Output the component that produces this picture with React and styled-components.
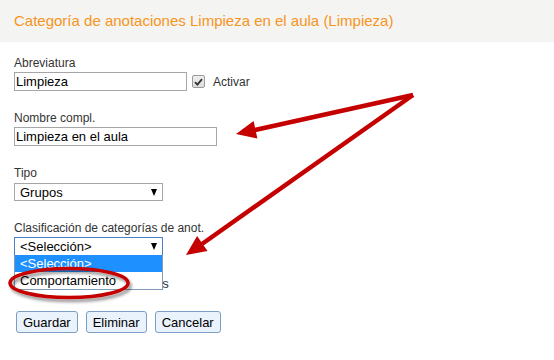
import React from "react";
import styled, { createGlobalStyle } from "styled-components";

const GlobalStyle = createGlobalStyle`
html, body {
  margin: 0;
  padding: 0;
  background: #ffffff;
  font-family: "Liberation Sans", Arial, sans-serif;
}
`

const Page = styled.div`
position: relative;
width: 554px;
height: 360px;
overflow: hidden;
background: #ffffff;
`

const TitleBar = styled.div`
height: 42px;
background-color: #f4f4f2;
display: flex;
align-items: center;
padding-left: 14px;
padding-bottom: 2px;
box-sizing: border-box;
`

const Title = styled.h1`
margin: 0;
font-weight: normal;
font-size: 15px;
color: #f7941e;
`

const Form = styled.div`
padding: 14px 0 0 14px;
display: flex;
flex-direction: column;
`

const Field = styled.div`
display: flex;
flex-direction: column;
gap: ${(p) => p.$gap || 2}px;
margin-bottom: 20px;
`

const Label = styled.label`
font-size: 12px;
line-height: 14px;
color: #333333;
`

const Row = styled.div`
display: flex;
align-items: center;
`

const TextInput = styled.input`
box-sizing: border-box;
width: ${(p) => p.$width}px;
height: 19px;
padding: 0 1px;
border: 1px solid #a6a6a6;
font-family: "Liberation Sans", Arial, sans-serif;
font-size: 13px;
color: #000000;
outline: none;
`

const Check = styled.span`
box-sizing: border-box;
display: inline-flex;
align-items: center;
justify-content: center;
width: 13px;
height: 13px;
border: 1px solid #9a9a9a;
border-radius: 2px;
background: linear-gradient(#f0f0f0, #dcdcdc);
margin-left: ${(p) => p.$offset || 0}px;
`

const CheckText = styled.span`
font-size: ${(p) => p.$size || 12}px;
color: #333333;
margin-left: ${(p) => p.$gap || 8}px;
`

const SelectBox = styled.div`
position: relative;
box-sizing: border-box;
width: 149px;
height: ${(p) => (p.$focused ? 19 : 18)}px;
border: 1px solid ${(p) => (p.$focused ? "#4a7fc8" : "#a6a6a6")};
background: #ffffff;
display: flex;
align-items: center;
justify-content: space-between;
padding: 0 5px 0 5px;
font-size: 13px;
color: #000000;
`

const Caret = styled.span`
width: 0;
height: 0;
border-left: 3.5px solid transparent;
border-right: 3.5px solid transparent;
border-top: 7px solid #000000;
`

const OptionList = styled.div`
position: absolute;
left: -1px;
top: 100%;
width: 149px;
box-sizing: border-box;
border: 1px solid #7f9db9;
border-top: none;
background: #ffffff;
z-index: 2;
`

const Option = styled.div`
height: 17px;
line-height: 17px;
padding-left: 5px;
font-size: 13px;
color: ${(p) => (p.$active ? "#ffffff" : "#000000")};
background: ${(p) => (p.$active ? "#1e90ff" : "#ffffff")};
`

const ButtonBar = styled.div`
display: flex;
gap: 8px;
margin-left: 2px;
margin-top: 20px;
`

const Button = styled.button`
box-sizing: border-box;
height: 22px;
padding: 0 6px;
border: 1px solid #7b9ec4;
border-radius: 3px;
background: #eaf2fb;
font-family: "Liberation Sans", Arial, sans-serif;
font-size: 13px;
color: #000000;
`

const Overlay = styled.svg`
position: absolute;
left: 0;
top: 0;
pointer-events: none;
z-index: 3;
`

const CheckMark = () => (
  <svg width="9" height="8" viewBox="0 0 9 8">
    <path d="M1 4.2 L3.4 6.6 L8 1.2" fill="none" stroke="#333" strokeWidth="1.8" />
  </svg>
);

export default function App() {
  return (
    <Page>
      <GlobalStyle />
      <TitleBar>
        <Title>Categoría de anotaciones Limpieza en el aula (Limpieza)</Title>
      </TitleBar>
      <Form>
        <Field>
          <Label>Abreviatura</Label>
          <Row>
            <TextInput $width={173} readOnly value="Limpieza" />
            <Check $offset={5}><CheckMark /></Check>
            <CheckText>Activar</CheckText>
          </Row>
        </Field>
        <Field>
          <Label>Nombre compl.</Label>
          <TextInput $width={203} readOnly value="Limpieza en el aula" />
        </Field>
        <Field $gap={3}>
          <Label>Tipo</Label>
          <SelectBox>
            <span>Grupos</span>
            <Caret />
          </SelectBox>
        </Field>
        <Field>
          <Label>Clasificación de categorías de anot.</Label>
          <SelectBox $focused>
            <span>&lt;Selección&gt;</span>
            <Caret />
            <OptionList>
              <Option $active>&lt;Selección&gt;</Option>
              <Option>Comportamiento</Option>
            </OptionList>
          </SelectBox>
        </Field>
        <Row>
          <Check><CheckMark /></Check>
          <CheckText $size={13} $gap={6}>Mostrar en los informes</CheckText>
        </Row>
        <ButtonBar>
          <Button>Guardar</Button>
          <Button>Eliminar</Button>
          <Button>Cancelar</Button>
        </ButtonBar>
      </Form>
      <Overlay width="554" height="360" viewBox="0 0 554 360">
        <defs>
          <filter id="shade" x="-20%" y="-40%" width="140%" height="200%">
            <feDropShadow dx="2" dy="3" stdDeviation="1.8" floodColor="#000" floodOpacity="0.4" />
          </filter>
        </defs>
        <ellipse cx="69" cy="283" rx="59" ry="14.5" fill="none" stroke="#c40000" strokeWidth="3.5" filter="url(#shade)" />
        <path d="M413 95 L255 130" stroke="#c40000" strokeWidth="4.5" fill="none" />
        <polygon points="236,134 253.6,120.9 257.4,138.5" fill="#c40000" />
        <path d="M413 95 L202 244" stroke="#c40000" strokeWidth="4.5" fill="none" />
        <polygon points="186,255 197.1,236.1 207.5,250.9" fill="#c40000" />
      </Overlay>
    </Page>
  );
}
